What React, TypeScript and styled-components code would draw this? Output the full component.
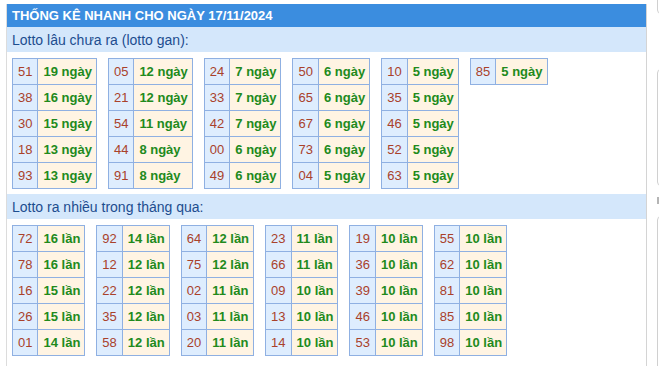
import React from 'react';
import styled, { createGlobalStyle } from 'styled-components';

const GlobalStyle = createGlobalStyle`
  html, body {
    margin: 0;
    padding: 0;
    background: #fff;
    overflow: hidden;
  }
  body {
    font-family: "Liberation Sans", Arial, sans-serif;
  }
`;

const Page = styled.div`
  display: flex;
  align-items: flex-start;
  padding-left: 6px;
  width: 653px;
  height: 366px;
  overflow: hidden;
`;

const Panel = styled.section`
  flex: none;
  width: 639px;
  margin-top: 4px;
  padding-bottom: 6px;
  border-left: 1px solid #dcdcdc;
  border-right: 1px solid #d4d4d4;
`;

const TitleBar = styled.h2`
  margin: 0;
  height: 23px;
  line-height: 24px;
  padding-left: 5px;
  background: #3b8ddf;
  color: #fff;
  font-size: 13px;
  font-weight: bold;
`;

const SectionHead = styled.h3`
  margin: 0;
  height: 25px;
  line-height: 26px;
  padding-left: 5px;
  background: #d4e7fb;
  color: #1d4d8f;
  font-size: 14px;
  font-weight: normal;
`;

const TableRow = styled.div`
  display: flex;
  align-items: flex-start;
  gap: 11px;
  padding: 6px 5px 5px;
`;

const LottoTable = styled.table`
  border-collapse: collapse;
  border: 1px solid #8fb0e2;
  font-size: 13px;
`;

const Cell = styled.td<{ $kind: 'num' | 'val' }>`
  height: 25px;
  padding: 0 ${({ $kind }) => ($kind === 'num' ? '5px' : '4px')} 0 5px;
  border: 1px solid #8fb0e2;
  white-space: nowrap;
  background: ${({ $kind }) => ($kind === 'num' ? '#deedfe' : '#fff4e3')};
  color: ${({ $kind }) => ($kind === 'num' ? '#a9412b' : '#218a1c')};
  font-weight: ${({ $kind }) => ($kind === 'num' ? 'normal' : 'bold')};
`;

const Sidebar = styled.aside`
  flex: none;
  display: flex;
  flex-direction: column;
  margin-left: 10px;
`;

const SideBox = styled.div<{ $h: number; $mt: number }>`
  width: 30px;
  height: ${({ $h }) => $h}px;
  margin-top: ${({ $mt }) => $mt}px;
  border: 1px solid #d0d0d0;
  border-radius: 4px;
`;

const SideTick = styled.div`
  width: 2px;
  height: 7px;
  margin-top: 11px;
  background: #b5b5b5;
`;

type Pair = [string, number];

const gan: Pair[][] = [
  [['51', 19], ['38', 16], ['30', 15], ['18', 13], ['93', 13]],
  [['05', 12], ['21', 12], ['54', 11], ['44', 8], ['91', 8]],
  [['24', 7], ['33', 7], ['42', 7], ['00', 6], ['49', 6]],
  [['50', 6], ['65', 6], ['67', 6], ['73', 6], ['04', 5]],
  [['10', 5], ['35', 5], ['46', 5], ['52', 5], ['63', 5]],
  [['85', 5]],
];

const nhieu: Pair[][] = [
  [['72', 16], ['78', 16], ['16', 15], ['26', 15], ['01', 14]],
  [['92', 14], ['12', 12], ['22', 12], ['35', 12], ['58', 12]],
  [['64', 12], ['75', 12], ['02', 11], ['03', 11], ['20', 11]],
  [['23', 11], ['66', 11], ['09', 10], ['13', 10], ['14', 10]],
  [['19', 10], ['36', 10], ['39', 10], ['46', 10], ['53', 10]],
  [['55', 10], ['62', 10], ['81', 10], ['85', 10], ['98', 10]],
];

const Tables: React.FC<{ cols: Pair[][]; unit: string }> = ({ cols, unit }) => (
  <TableRow>
    {cols.map((col, i) => (
      <LottoTable key={i}>
        <tbody>
          {col.map(([num, count]) => (
            <tr key={num}>
              <Cell $kind="num">{num}</Cell>
              <Cell $kind="val">
                {count} {unit}
              </Cell>
            </tr>
          ))}
        </tbody>
      </LottoTable>
    ))}
  </TableRow>
);

export default function App() {
  return (
    <>
      <GlobalStyle />
      <Page>
        <Panel>
          <TitleBar>THỐNG KÊ NHANH CHO NGÀY 17/11/2024</TitleBar>
          <SectionHead>Lotto lâu chưa ra (lotto gan):</SectionHead>
          <Tables cols={gan} unit="ngày" />
          <SectionHead>Lotto ra nhiều trong tháng qua:</SectionHead>
          <Tables cols={nhieu} unit="lần" />
        </Panel>
        <Sidebar>
          <SideBox $h={22} $mt={-10} />
          <SideBox $h={115} $mt={55} />
          <SideTick />
          <SideBox $h={200} $mt={12} />
        </Sidebar>
      </Page>
    </>
  );
}
